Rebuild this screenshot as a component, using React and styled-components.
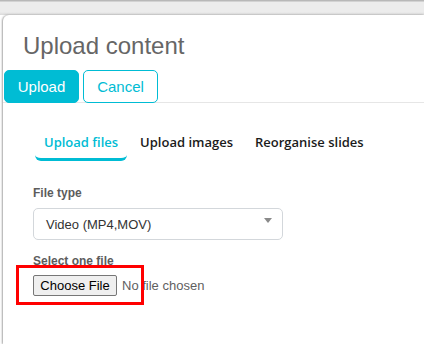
import React from 'react';
import styled, { createGlobalStyle } from 'styled-components';

const teal = '#00bcd4';

const GlobalStyle = createGlobalStyle`
    html, body {
        margin: 0;
        padding: 0;
        background: #ffffff;
        font-family: "Liberation Sans", Arial, sans-serif;
    }
    body {
        width: 424px;
        height: 344px;
        overflow: hidden;
    }
`;

const Page = styled.div`
    display: flex;
    flex-flow: column;
    height: 344px;
`;

const TopBar = styled.div`
    height: 15px;
    flex-shrink: 0;
    background: linear-gradient(#b8b8b8 0, #b8b8b8 1px, #ececec 2px, #ececec 12px, #d9d9d9 15px);
`;

const Modal = styled.div`
    position: relative;
    flex: 1;
    margin-left: 3px;
    background: #ffffff;
    border-top-left-radius: 6px;
    box-shadow: -1px 0 2px rgba(0, 0, 0, 0.35);
`;

const Header = styled.div`
    padding-top: 18px;
    border-bottom: 1px solid #e6e6e6;
`;

const Title = styled.h2`
    margin: 0 0 11px 20px;
    font-size: 24px;
    line-height: 26px;
    font-weight: normal;
    color: #666666;
`;

const ButtonRow = styled.div`
    display: flex;
    gap: 4px;
    padding-left: 1px;
    margin-bottom: -1px;
`;

const Button = styled.button`
    width: 75px;
    height: 33px;
    border-radius: 5px;
    font-family: "Liberation Sans", Arial, sans-serif;
    font-size: 15px;
    cursor: pointer;
    border: 1px solid ${teal};
    background: ${p => (p.$primary ? teal : '#ffffff')};
    color: ${p => (p.$primary ? '#ffffff' : teal)};
`;

const Body = styled.div`
    padding: 30px 0 0 30px;
`;

const Tabs = styled.div`
    display: flex;
    gap: 4px;
    margin-left: 2px;
`;

const Tab = styled.div`
    padding: 0 9px 7px;
    font-family: "Open Sans", sans-serif;
    font-size: 13px;
    line-height: 18px;
    font-weight: 600;
    color: ${p => (p.$active ? teal : '#1b1b1b')};
    border-bottom: 3px solid ${p => (p.$active ? teal : 'transparent')};
    border-radius: 6px;
    cursor: pointer;
`;

const Label = styled.div`
    margin-top: ${p => p.$top}px;
    font-size: 12px;
    line-height: 16px;
    font-weight: bold;
    color: #5c5c5c;
`;

const Select = styled.div`
    position: relative;
    box-sizing: border-box;
    width: 250px;
    height: 32px;
    margin-top: 7px;
    padding-left: 12px;
    display: flex;
    align-items: center;
    border: 1px solid #d3d7db;
    border-radius: 5px;
    font-size: 13px;
    color: #333333;
    &::after {
        content: '';
        position: absolute;
        right: 10px;
        top: 9px;
        border-left: 4px solid transparent;
        border-right: 4px solid transparent;
        border-top: 5px solid #8a8a8a;
    }
`;

const FileRow = styled.div`
    position: relative;
    display: flex;
    align-items: center;
    gap: 5px;
    margin-top: 6px;
    font-size: 13px;
`;

const FileButton = styled.button`
    box-sizing: border-box;
    width: 84px;
    height: 21px;
    padding: 0;
    font-family: "Liberation Sans", Arial, sans-serif;
    font-size: 13px;
    color: #000000;
    background: #efefef;
    border: 1px solid #767676;
    border-radius: 2px;
`;

const FileName = styled.span`
    color: #5f5f5f;
`;

const Highlight = styled.div`
    position: absolute;
    left: -17px;
    top: -10px;
    width: 122px;
    height: 34px;
    border: 3px solid #ff0000;
    pointer-events: none;
`;

export default function App() {
    return (
        <Page>
            <GlobalStyle />
            <TopBar />
            <Modal>
                <Header>
                    <Title>Upload content</Title>
                    <ButtonRow>
                        <Button type="button" $primary>Upload</Button>
                        <Button type="button">Cancel</Button>
                    </ButtonRow>
                </Header>
                <Body>
                    <Tabs>
                        <Tab $active>Upload files</Tab>
                        <Tab>Upload images</Tab>
                        <Tab>Reorganise slides</Tab>
                    </Tabs>
                    <Label $top={24}>File type</Label>
                    <Select>Video (MP4,MOV)</Select>
                    <Label $top={13}>Select one file</Label>
                    <FileRow>
                        <FileButton type="button">Choose File</FileButton>
                        <FileName>No file chosen</FileName>
                        <Highlight />
                    </FileRow>
                </Body>
            </Modal>
        </Page>
    );
}
